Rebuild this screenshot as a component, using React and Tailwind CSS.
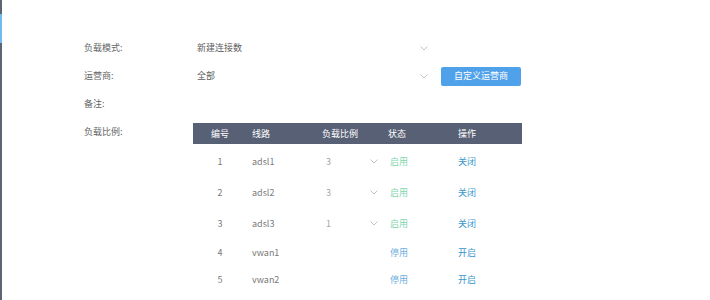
const rows = [
  { id: 1, line: "adsl1", ratio: "3", on: true },
  { id: 2, line: "adsl2", ratio: "3", on: true },
  { id: 3, line: "adsl3", ratio: "1", on: true },
  { id: 4, line: "vwan1", ratio: null, on: false },
  { id: 5, line: "vwan2", ratio: null, on: false },
];

function Chevron() {
  return (
    <svg width="8" height="5" viewBox="0 0 8 5" fill="none">
      <path d="M0.5 0.5 L4 4 L7.5 0.5" stroke="#b9bdc4" strokeWidth="0.9" />
    </svg>
  );
}

function SelectBox({ value }) {
  return (
    <div className="flex h-[22px] w-[239px] items-center justify-between pl-[4px] pr-[4px]">
      <span className="text-[#5c5c5c]">{value}</span>
      <Chevron />
    </div>
  );
}

export default function App() {
  return (
    <div className="flex h-[300px] w-[710px] bg-white font-['Noto_Sans_CJK_SC',sans-serif] text-[9px] leading-[18px] text-[#666]">
      <div className="flex w-[2px] flex-col">
        <div className="h-[14px] bg-[#5d6572]" />
        <div className="h-[29px] bg-[#74b9ee]" />
        <div className="flex-1 bg-[#5d6572]" />
      </div>

      <div className="flex-1 pl-[82px] pt-[34px]">
        <div className="flex h-[28px] items-center">
          <div className="w-[109px]">负载模式:</div>
          <SelectBox value="新建连接数" />
        </div>

        <div className="flex h-[28px] items-center">
          <div className="w-[109px]">运营商:</div>
          <SelectBox value="全部" />
          <button className="ml-[9px] h-[19px] w-[80px] rounded-[2px] bg-[#4fa2ea] text-[9px] text-white">
            自定义运营商
          </button>
        </div>

        <div className="flex h-[28px] items-center">
          <div className="w-[109px]">备注:</div>
        </div>

        <div className="flex items-start">
          <div className="mt-[5px] w-[109px]">负载比例:</div>
          <div className="mt-[5px] w-[329px]">
            <div className="grid h-[21px] grid-cols-[54px_73px_66px_67px_1fr] items-center bg-[#586075] text-white">
              <div className="text-center">编号</div>
              <div className="pl-[5px]">线路</div>
              <div className="pl-[2px]">负载比例</div>
              <div className="pl-[2px]">状态</div>
              <div className="pl-[5px]">操作</div>
            </div>
            <div className="mt-[2px] text-[#7a7a7a]">
              {rows.map((r) => (
                <div
                  key={r.id}
                  className={`grid grid-cols-[54px_73px_66px_67px_1fr] items-center ${
                    r.ratio ? "h-[31px]" : "h-[27px]"
                  }`}
                >
                  <div className="text-center">{r.id}</div>
                  <div className="pl-[5px]">{r.line}</div>
                  <div className="flex items-center pl-[6px] pr-[8px]">
                    {r.ratio && (
                      <>
                        <span className="flex-1 text-[#a5a5a5]">{r.ratio}</span>
                        <Chevron />
                      </>
                    )}
                  </div>
                  <div className={`pl-[4px] ${r.on ? "text-[#7dd5ae]" : "text-[#6aaede]"}`}>
                    {r.on ? "启用" : "停用"}
                  </div>
                  <div className="pl-[5px] text-[#3a96cc]">{r.on ? "关闭" : "开启"}</div>
                </div>
              ))}
            </div>
          </div>
        </div>
      </div>
    </div>
  );
}
